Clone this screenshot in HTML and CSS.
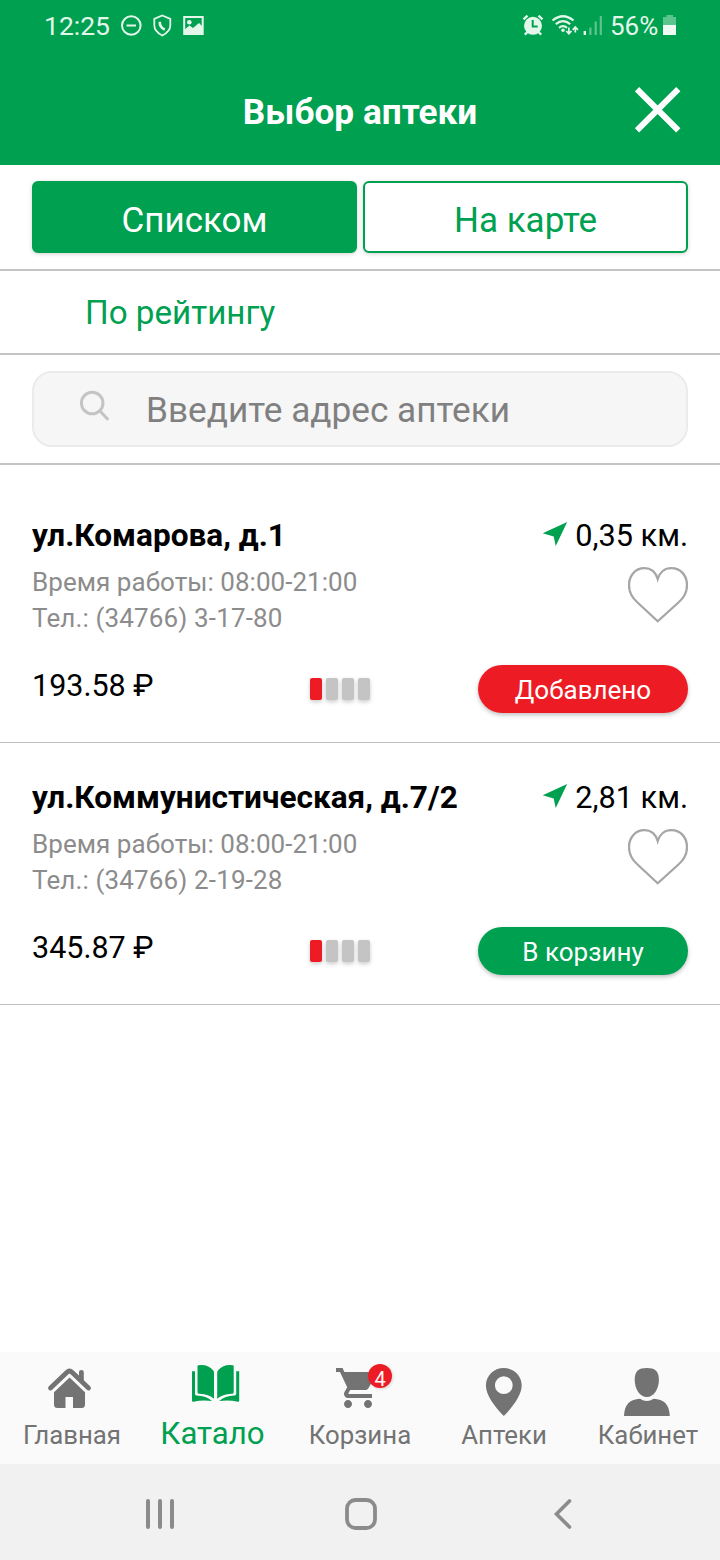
FILE: index.html
```html
<!DOCTYPE html>
<html lang="ru">
<head>
<meta charset="utf-8">
<title>Выбор аптеки</title>
<link rel="stylesheet" href="styles.css">
</head>
<body>
<div class="screen">
  <header class="header">
    <div class="status">
      <div class="status-left">
        <span class="clock">12:25</span>
        <svg class="status-icons" width="90" height="30" viewBox="118 11 90 30" fill="none" stroke="#e2f7ea" stroke-width="2">
          <circle cx="131.300" cy="25.500" r="9.300"/>
          <path d="M126.500 25.500h9.500"/>
          <path d="M162.300 15.500l8 3.300v6.500c0 4.500-3.500 8-8 10.200c-4.500-2.200-8-5.700-8-10.200v-6.500z" stroke-width="1.800"/>
          <path d="M159.800 21.800c-.2 4 1.600 6.500 5 7.700" stroke-width="2.600"/>
          <path d="M184.200 17h18.500v17h-18.500z"/>
          <path d="M184 30l5.500-4.500l3.500 2.500l6-5l4 4v7.500h-19z" fill="#e2f7ea" stroke="none"/>
          <circle cx="189.300" cy="22.300" r="2.300" fill="#e2f7ea" stroke="none"/>
        </svg>
      </div>
      <div class="status-right">
        <svg width="86" height="30" viewBox="520 11 86 30" fill="none" stroke="#e2f7ea">
          <circle cx="533" cy="25.800" r="9" fill="#e2f7ea" stroke="none"/>
          <path d="M523.500 19.300l4-3.600M542.500 19.300l-4-3.600M527.500 32l-2.700 2.700M538.500 32l2.700 2.700" stroke-width="2.400"/>
          <path d="M532.700 20v6.500h5" stroke="#00a051" stroke-width="2"/>
          <path d="M552.500 20.500q10.500-8.500 21 0M555.800 24.200q7.200-6 14.400 0M559 27.800q4-3.200 8 0" stroke-width="2.200"/>
          <circle cx="563" cy="30.300" r="1.700" fill="#e2f7ea" stroke="none"/>
          <path d="M568.900 27.500v6M566.300 31l2.600 2.800l2.600-2.800M575.300 32.500v-5M572.700 29.800l2.600-2.800l2.600 2.800" stroke-width="1.700"/>
          <path d="M584.800 35v-4" stroke-width="2.400"/>
          <path d="M590.400 35v-7.500M595.700 35v-13.500M600.800 35v-19" stroke-width="2.200" stroke="#5fc38e"/>
        </svg>
        <span class="percent">56%</span>
        <svg width="16" height="30" viewBox="662 11 16 30">
          <path d="M666.500 15h6.500v2h3v8h-13v-8h3.500z" fill="#5cc48d"/>
          <path d="M663 25h13v10h-13z" fill="#eefaf2"/>
        </svg>
      </div>
    </div>
    <h1 class="title">Выбор аптеки</h1>
    <svg class="close" width="46" height="46" viewBox="635 87 46 46" stroke="#fff" stroke-width="6"><path d="M637 89.200l41.300 41.100M678.300 89.200l-41.300 41.100"/></svg>
  </header>

  <div class="tabs">
    <button class="tab tab-active">Списком</button>
    <button class="tab">На карте</button>
  </div>
  <div class="sort"><span class="sort-label">По рейтингу</span></div>
  <div class="search">
    <div class="search-box">
      <svg width="32" height="32" viewBox="79 390 32 32" fill="none" stroke="#c4c4c4" stroke-width="3" stroke-linecap="round"><circle cx="92.200" cy="403" r="10.800"/><path d="M100 411l7.500 8"/></svg>
      <span class="placeholder">Введите адрес аптеки</span>
    </div>
  </div>

  <main class="list">
    <section class="card">
      <div class="row-top">
        <h2 class="address">ул.Комарова, д.1</h2>
        <div class="distance">
          <svg width="26" height="26" viewBox="542 521 26 26"><path d="M567.200 522l-24.500 11.300l11 3.200l2 9.500z" fill="#00a051"/></svg>
          <span>0,35 км.</span>
        </div>
      </div>
      <div class="row-info">
        <div class="info"><p class="hours">Время работы: 08:00-21:00</p><p class="phone">Тел.: (34766) 3-17-80</p></div>
        <svg class="heart" width="60" height="56" viewBox="628 567 60 56" fill="none" stroke="#a6a6a6" stroke-width="2.300"><path d="M657.700 579c-2-6.500-6.700-10.800-13.200-10.800c-9.500 0-15.500 7.500-15.500 17c0 6.500 3 12.300 8 16.800l20.700 19.300l21.300-19.300c5-4.500 8-10.300 8-16.800c0-9.500-6-17-15.800-17c-6.500 0-11.500 4.300-13.500 10.800z"/></svg>
      </div>
      <div class="row-buy">
        <span class="price">193.58 ₽</span>
        <div class="stock"><i class="bar bar-on"></i><i class="bar"></i><i class="bar"></i><i class="bar"></i></div>
        <button class="buy buy-added">Добавлено</button>
      </div>
    </section>
    <section class="card">
      <div class="row-top">
        <h2 class="address">ул.Коммунистическая, д.7/2</h2>
        <div class="distance">
          <svg width="26" height="26" viewBox="542 521 26 26"><path d="M567.200 522l-24.500 11.300l11 3.200l2 9.500z" fill="#00a051"/></svg>
          <span>2,81 км.</span>
        </div>
      </div>
      <div class="row-info">
        <div class="info"><p class="hours">Время работы: 08:00-21:00</p><p class="phone">Тел.: (34766) 2-19-28</p></div>
        <svg class="heart" width="60" height="56" viewBox="628 567 60 56" fill="none" stroke="#a6a6a6" stroke-width="2.300"><path d="M657.700 579c-2-6.500-6.700-10.800-13.200-10.800c-9.500 0-15.500 7.500-15.500 17c0 6.500 3 12.300 8 16.800l20.700 19.300l21.300-19.300c5-4.500 8-10.300 8-16.800c0-9.500-6-17-15.800-17c-6.500 0-11.500 4.300-13.500 10.800z"/></svg>
      </div>
      <div class="row-buy">
        <span class="price">345.87 ₽</span>
        <div class="stock"><i class="bar bar-on"></i><i class="bar"></i><i class="bar"></i><i class="bar"></i></div>
        <button class="buy">В корзину</button>
      </div>
    </section>
  </main>

  <nav class="bottom">
    <a class="item">
      <svg width="60" height="56" viewBox="42 1360 60 56" fill="#737373"><path d="M79 1380v-8q0-2 2.400-2t2.400 2v12z"/><path d="M50.500 1388l16.500-15.700q2.500-2.500 5 0l16.500 15.700" fill="none" stroke="#737373" stroke-width="4.800" stroke-linecap="round"/><path d="M69.600 1377.500l15.400 14.700v12.300q0 3.500-3.500 3.500h-8.500v-11h-7.500v11h-8q-3.500 0-3.500-3.500v-12.300z"/></svg>
      <span class="label">Главная</span>
    </a>
    <a class="item item-active">
      <svg width="60" height="56" viewBox="186 1360 60 56" fill="#00a051"><path d="M198 1365.300q10-1.500 15.500 5.500q.5 1 .5 2v26q-5-4.500-14.500-5q-2 0-2-1.500v-25.500q0-1 .5-1.500z"/><path d="M233.200 1365.300q-10-1.500-15.500 5.500q-.5 1-.5 2v26q5-4.500 14.500-5q2 0 2-1.500v-25.500q0-1-.5-1.500z"/><path d="M192 1371.200h3v22.800q0 1.300 1.500 1.500q10 .3 15.500 5.500q-10-1.200-18.500.7q-1.500.3-1.500-1.200z"/><path d="M239.200 1371.200h-3v22.800q0 1.300-1.500 1.500q-10 .3-15.500 5.500q10-1.200 18.500.7q1.500.3 1.500-1.200z"/></svg>
      <span class="label label-active">Катало</span>
    </a>
    <a class="item">
      <span class="cart">
        <svg width="60" height="56" viewBox="330 1360 60 56" fill="#737373"><path transform="translate(334 1364) scale(2)" d="M7 18c-1.100 0-1.990.9-1.990 2S5.900 22 7 22s2-.9 2-2-.9-2-2-2zM1 2v2h2l3.600 7.590-1.350 2.450c-.16.28-.25.610-.25.960 0 1.100.9 2 2 2h12v-2H7.420c-.14 0-.25-.11-.25-.25l.03-.12.9-1.630h7.450c.75 0 1.410-.41 1.750-1.030l3.580-6.490c.08-.14.12-.31.12-.48 0-.55-.45-1-1-1H5.210l-.94-2H1zm16 16c-1.100 0-1.990.9-1.990 2s.89 2 1.990 2 2-.9 2-2-.9-2-2-2z"/></svg>
        <b class="badge">4</b>
      </span>
      <span class="label">Корзина</span>
    </a>
    <a class="item">
      <svg width="60" height="56" viewBox="474 1360 60 56" fill="#737373" fill-rule="evenodd"><path d="M503.800 1368c10 0 17.900 7.800 17.900 17.500c0 9-8 20.500-17.900 30.500c-9.900-10-17.900-21.500-17.900-30.500c0-9.700 7.900-17.500 17.900-17.500zM503.800 1376.300a8.900 8.900 0 1 0 0 17.800a8.900 8.900 0 1 0 0-17.800z"/></svg>
      <span class="label">Аптеки</span>
    </a>
    <a class="item">
      <svg width="60" height="56" viewBox="618 1360 60 56" fill="#737373"><path d="M646.800 1368c8 0 11.900 3 12.100 11c.2 10-5 18-12.100 18s-12.300-8-12.100-18c.2-8 4.100-11 12.100-11z"/><path d="M640 1398.700q6.800 4.800 13.600 0c10 .5 15.800 5.300 16.200 17.300h-45.800c.4-12 6.200-16.800 16-17.300z"/></svg>
      <span class="label">Кабинет</span>
    </a>
  </nav>
  <div class="system">
    <svg width="30" height="32" viewBox="145 1498 30 32" stroke="#8b8b8b" stroke-width="4" stroke-linecap="round"><path d="M148 1501v26M160 1501v26M172 1501v26"/></svg>
    <svg width="32" height="32" viewBox="345 1498 32 32" fill="none" stroke="#8b8b8b" stroke-width="3.800"><rect x="347" y="1500" width="28" height="28" rx="8.500"/></svg>
    <svg width="20" height="32" viewBox="553 1498 20 32" fill="none" stroke="#8b8b8b" stroke-width="3.600" stroke-linecap="round"><path d="M569.500 1501l-13 13l13 13"/></svg>
  </div>
</div>
</body>
</html>
```
FILE: styles.css
```css
* { box-sizing: border-box; margin: 0; padding: 0; }
body { font-family: Roboto, "Noto Sans", sans-serif; background: #fff; color: #000; }
svg { display: block; flex: none; }
button { font: inherit; }
.screen { width: 720px; height: 1560px; display: flex; flex-direction: column; overflow: hidden; white-space: nowrap; }

.header { height: 165px; background: #00a051; color: #fff; display: grid; grid-template-columns: 135px 1fr 135px; grid-template-rows: 52px 113px; }
.status { grid-column: 1 / 4; display: flex; justify-content: space-between; padding: 11px 42px 0 44px; color: #e2f7ea; font-size: 26.500px; line-height: 30px; }
.status-left { display: flex; gap: 8px; }
.status-right { display: flex; }
.clock { width: 66px; }
.percent { width: 52px; margin-left: 4px; font-size: 26px; }
.title { grid-column: 2; text-align: center; font-size: 35.200px; font-weight: 700; line-height: 40px; padding-top: 40px; }
.close { margin: 35px 0 0 50px; }

.tabs { height: 106px; padding: 16px 32px 0; display: flex; gap: 6px; border-bottom: 2px solid #c4c4c4; }
.tab { flex: 1; height: 72px; border: 2px solid #00a051; border-radius: 6px; background: #fff; color: #00a051; font-size: 35px; line-height: 64px; padding-top: 6px; padding-bottom: 0; box-shadow: 0 1px 4px rgba(0, 0, 0, .18); }
.tab-active { background: #00a051; color: #fff; }
.sort { height: 84px; padding: 22px 85px 0; border-bottom: 2px solid #c4c4c4; color: #00a051; font-size: 33.200px; line-height: 40px; }
.search { height: 110px; padding: 16px 32px 0; border-bottom: 2px solid #c4c4c4; }
.search-box { height: 76px; border: 2px solid #ebebeb; border-radius: 20px; background: #f6f6f6; display: flex; padding: 17px 45px 0; gap: 35px; }
.placeholder { font-size: 35.200px; line-height: 40px; color: #808080; }

.list { flex: 1; padding-top: 16px; }
.card { height: 262px; padding: 36px 32px 0; border-bottom: 1px solid #c0c0c0; }
.row-top { display: flex; justify-content: space-between; height: 47px; line-height: 38px; }
.address { font-size: 31.550px; font-weight: 700; }
.distance { display: flex; gap: 7px; font-size: 30.700px; }
.distance svg { margin-top: 4px; }
.row-info { display: flex; justify-content: space-between; height: 101px; color: #8c8c8c; font-size: 26px; line-height: 36px; }
.hours { letter-spacing: .04px; }
.phone { letter-spacing: .14px; }
.heart { margin-top: 3px; }
.row-buy { display: grid; grid-template-columns: 278px 1fr 210px; height: 48px; }
.price { font-size: 30.500px; line-height: 38px; padding-top: 2px; }
.stock { display: flex; gap: 4px; padding-top: 13px; }
.bar { width: 12px; height: 22px; border-radius: 2px; background: #c4c4c4; box-shadow: 0 2px 4px rgba(0, 0, 0, .2); }
.bar-on { background: #ed1c24; }
.buy { height: 48px; border: 0; border-radius: 24px; background: #00a051; color: #fff; font-size: 26px; line-height: 44px; padding-top: 2px; box-shadow: 0 2px 4px rgba(0, 0, 0, .25); }
.buy-added { background: #ed1c24; }

.bottom { height: 112px; background: #fafafa; display: grid; grid-template-columns: repeat(5, 144px); }
.item { display: flex; flex-direction: column; align-items: center; padding-top: 8px; color: #737373; font-size: 25.800px; line-height: 39px; }
.item-active { color: #00a051; font-size: 31.200px; line-height: 35px; }
.label-active { margin-right: 7px; }
.cart { position: relative; }
.badge { position: absolute; left: 38px; top: 4px; width: 24px; height: 24px; border-radius: 12px; background: #ed1c24; color: #fff; font-size: 20px; font-weight: 400; line-height: 31px; text-align: center; box-shadow: 1px 1px 3px rgba(0, 0, 0, .15); }
.system { height: 96px; background: #f1f1f1; display: grid; grid-template-columns: 30px 32px 20px; justify-content: start; column-gap: 170px; padding: 34px 0 0 145px; }
.system svg:nth-child(3) { margin-left: 6px; }
```
